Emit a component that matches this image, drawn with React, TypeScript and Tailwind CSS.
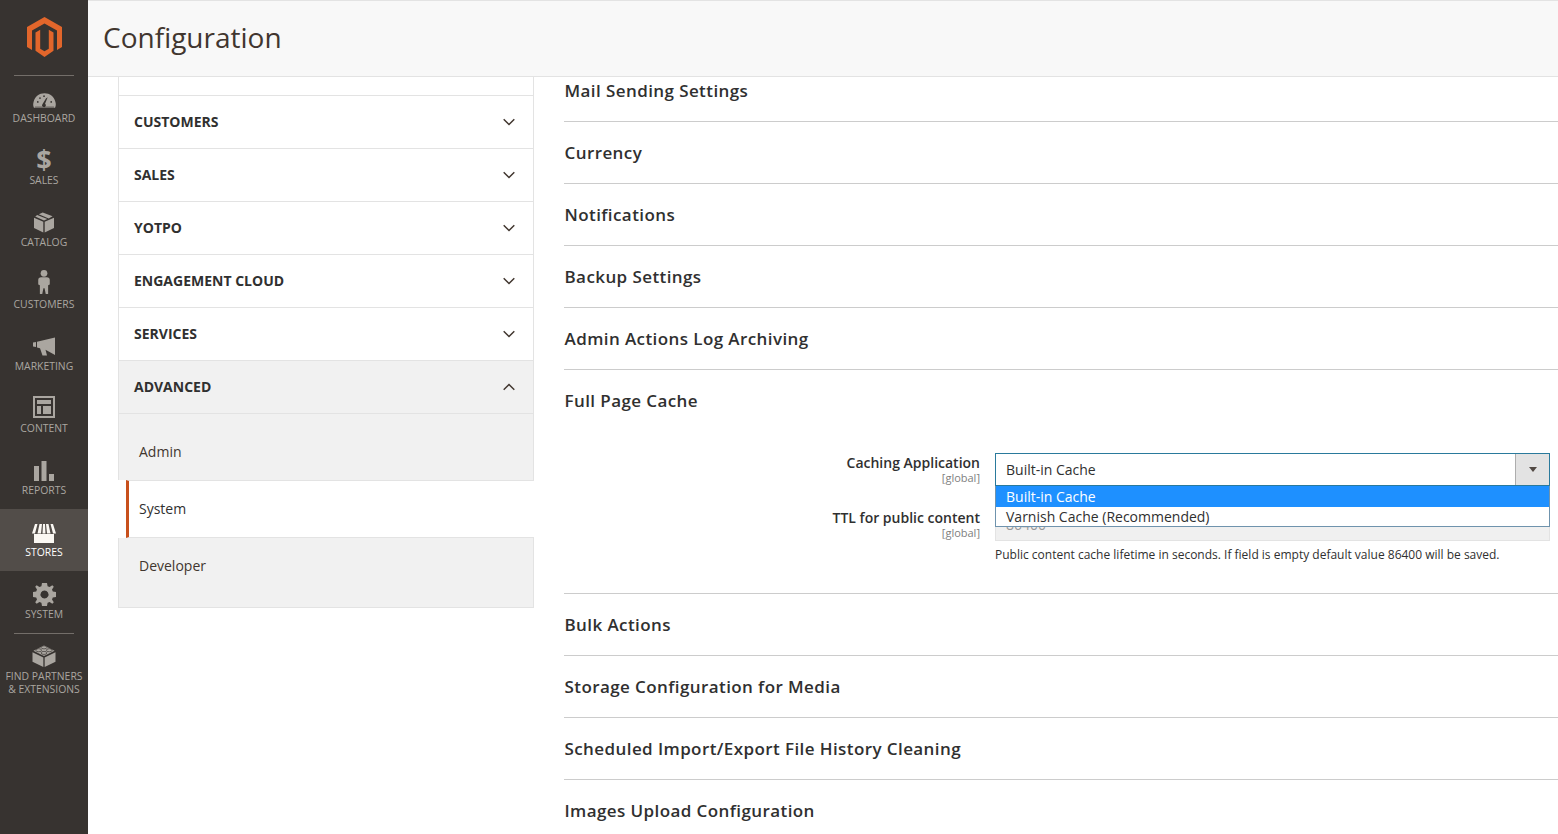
import React from "react";

const iconFill = "#aaa6a0";

function Logo() {
  return (
    <svg width="35" height="41" viewBox="0 0 35 41">
      <path fill="#e2662b" d="M17.500 0 35 10V30L30 33V13.500L17.500 6.500 5 13.500V33L0 30V10Z" />
      <path fill="#e2662b" d="M8.500 15.500 13.200 12.800V31.800L17.500 34.300 21.800 31.800V12.800L26.500 15.500V33.800L17.500 40 8.500 33.800Z" />
    </svg>
  );
}

function Dashboard() {
  return (
    <svg width="23" height="17" viewBox="0 0 24 17">
      <path fill={iconFill} d="M1 16C0 14 0 12 .6 10 2 4.500 6.500 1 12 1s10 3.500 11.400 9c.6 2 .6 4-.4 6Z" />
      <path fill="#373330" d="M13.500 6.500 15.300 5 12.600 11.800A2 2 0 1 1 9.800 12.300Z" />
      <circle cx="5" cy="10" r=".9" fill="#373330" />
      <circle cx="7.300" cy="6" r=".9" fill="#373330" />
      <circle cx="11.500" cy="4" r=".9" fill="#373330" />
      <circle cx="19" cy="10" r=".9" fill="#373330" />
      <path fill="#373330" d="M2 15h20v.6H2Z" />
    </svg>
  );
}

function Box() {
  return (
    <svg width="20" height="21" viewBox="0 0 20 20">
      <path fill={iconFill} d="M0 5.200 9.300 9.300V20L0 15.500ZM20 5.200V15.500L10.700 20V9.300ZM4.800 1.800 8.700 0 18.600 3.800 14.700 5.900ZM3.200 2.500 13.300 6.600 10 8 1.200 4.100Z" />
    </svg>
  );
}

function Customer() {
  return (
    <svg width="12" height="24" viewBox="0 0 12 25" className="mb-[1px]">
      <circle cx="6" cy="3.500" r="3.500" fill={iconFill} />
      <path fill={iconFill} d="M3 7.500h6c1.800 0 3 1 3 2.800V15l-1.700 1V25H7.800L6.600 19H5.400L4.200 25H1.700V16L0 15V10.300C0 8.500 1.200 7.500 3 7.500Z" />
    </svg>
  );
}

function Megaphone() {
  return (
    <svg width="23" height="19" viewBox="0 0 23 19" className="mb-[1px]">
      <path fill={iconFill} d="M0 5.500 3 5v5L0 9.500ZM4 4.800 22 0.500V18L12.500 12.800 14 18.500H9.500L7 11.300 4 10.500Z" />
    </svg>
  );
}

function Content() {
  return (
    <svg width="22" height="22" viewBox="0 0 22 22" className="mb-[1px]">
      <path fill={iconFill} fillRule="evenodd" d="M0 0H22V22H0ZM2 2V20H20V2ZM4 4H18V8H4ZM4 10H8V18H4ZM10 10H18V18H10Z" />
    </svg>
  );
}

function Reports() {
  return (
    <svg width="20" height="20" viewBox="0 0 20 20">
      <path fill={iconFill} d="M0 5H5V20H0ZM7.500 0H12.500V20H7.500ZM15 13H20V20H15Z" />
    </svg>
  );
}

function Stores() {
  return (
    <svg width="24" height="19" viewBox="0 0 24 19">
      <path fill="#fbf8f3" d="M2 10H22V19H2Z" />
      <path fill="#fbf8f3" d="M3 0H5.500L3 9.500H0ZM7.500 0H10L9 9.500H5.500ZM11 0H13L13.500 9.500H10.500ZM14 0H16.500L18.500 9.500H15ZM18.500 0H21L24 9.500H21Z" />
    </svg>
  );
}

function Gear() {
  return (
    <svg width="23" height="23" viewBox="0 0 23 23" className="-mb-[1px]">
      <path
        fill={iconFill}
        fillRule="evenodd"
        d="M9 0H14L14.600 3.200 16.600 4 19.300 2.200 20.800 3.700 19 6.400 19.800 8.400 23 9V14L19.800 14.600 19 16.600 20.800 19.300 19.300 20.800 16.600 19 14.600 19.800 14 23H9L8.400 19.800 6.400 19 3.700 20.800 2.200 19.300 4 16.600 3.200 14.600 0 14V9L3.200 8.400 4 6.400 2.200 3.700 3.700 2.200 6.400 4 8.400 3.200ZM11.500 7.500A4 4 0 1 0 11.501 7.500Z"
      />
    </svg>
  );
}

function Lego() {
  return (
    <svg width="24" height="23" viewBox="0 0 24 24">
      <path fill={iconFill} d="M0 8.500 11.300 14V24L0 18.500ZM24 8.500V18.500L12.700 24V14ZM12 1.500 23 7 12 12.500 1 7Z" />
      <ellipse cx="12" cy="3.500" rx="3" ry="1.600" fill={iconFill} stroke="#373330" strokeWidth=".7" />
      <ellipse cx="6.500" cy="6.500" rx="3" ry="1.600" fill={iconFill} stroke="#373330" strokeWidth=".7" />
      <ellipse cx="17.500" cy="6.500" rx="3" ry="1.600" fill={iconFill} stroke="#373330" strokeWidth=".7" />
      <ellipse cx="12" cy="9.300" rx="3" ry="1.600" fill={iconFill} stroke="#373330" strokeWidth=".7" />
    </svg>
  );
}

function SideItem({ label, icon, active }: { label: React.ReactNode; icon: React.ReactNode; active?: boolean }) {
  return (
    <div className={`h-[62px] flex flex-col items-center ${active ? "bg-[#524d49] text-white" : "text-[#aaa6a0]"}`}>
      <div className="h-[34px] flex items-end justify-center">{icon}</div>
      <div className="mt-[3px] text-[10.400px] leading-[13px] text-center whitespace-nowrap">{label}</div>
    </div>
  );
}

function Chevron({ up }: { up?: boolean }) {
  return (
    <svg width="12" height="8" viewBox="0 0 12 8" fill="none" stroke="#41362f" strokeWidth="1.500">
      <path d={up ? "M.7 6.800 6 1.500l5.300 5.300" : "M.7 1.200 6 6.500l5.300-5.300"} />
    </svg>
  );
}

function NavHead({ label, open }: { label: string; open?: boolean }) {
  return (
    <div className={`h-[53px] border-b border-[#e3e3e3] flex items-center justify-between pl-[15px] pr-[18px] ${open ? "bg-[#f1f1f1]" : "bg-white"}`}>
      <span className="text-[14px] font-bold text-[#303030] pb-[2px]">{label}</span>
      <Chevron up={open} />
    </div>
  );
}

function Section({ title, last }: { title: string; last?: boolean }) {
  return (
    <div className={`h-[62px] flex items-center ${last ? "" : "border-b border-[#cccccc]"}`}>
      <span className="text-[17px] font-semibold tracking-[0.41px] text-[#303030] pl-[0.5px]">{title}</span>
    </div>
  );
}

export default function App() {
  return (
    <div className="h-[834px] w-[1558px] overflow-hidden flex bg-white font-['Open_Sans',sans-serif]">
      <aside className="w-[88px] shrink-0 bg-[#373330] flex flex-col">
        <div className="h-[76px] shrink-0 relative flex justify-center pt-[17px]">
          <Logo />
          <div className="absolute left-[14px] right-[14px] bottom-0 h-px bg-[#736e69]" />
        </div>
        <div className="-mt-px">
          <SideItem label="DASHBOARD" icon={<Dashboard />} />
          <SideItem label="SALES" icon={<span className="text-[27px] leading-[24px] font-bold">$</span>} />
          <SideItem label="CATALOG" icon={<Box />} />
          <SideItem label="CUSTOMERS" icon={<Customer />} />
          <SideItem label="MARKETING" icon={<Megaphone />} />
          <SideItem label="CONTENT" icon={<Content />} />
          <SideItem label="REPORTS" icon={<Reports />} />
          <SideItem label="STORES" icon={<Stores />} active />
          <SideItem label="SYSTEM" icon={<Gear />} />
        </div>
        <div className="mx-[14px] h-px bg-[#736e69]" />
        <SideItem
          label={
            <>
              FIND PARTNERS
              <br />& EXTENSIONS
            </>
          }
          icon={<Lego />}
        />
      </aside>

      <main className="flex-1 min-w-0 flex flex-col">
        <header className="h-[77px] shrink-0 bg-[#f8f8f8] border-t border-t-[#e3e3e3] border-b border-b-[#e3e3e3] flex items-center pl-[15px]">
          <h1 className="text-[28px] font-normal text-[#41362f] pb-[3px]">Configuration</h1>
        </header>

        <div className="flex flex-1 min-h-0">
          <nav className="w-[416px] ml-[30px] shrink-0 self-start">
            <div className="border-x border-[#e3e3e3]">
              <div className="h-[19px] border-b border-[#e3e3e3]" />
              <NavHead label="CUSTOMERS" />
              <NavHead label="SALES" />
              <NavHead label="YOTPO" />
              <NavHead label="ENGAGEMENT CLOUD" />
              <NavHead label="SERVICES" />
              <NavHead label="ADVANCED" open />
            </div>
            <div className="h-[66px] bg-[#f1f1f1] border-x border-[#e3e3e3] flex items-center pl-[20px] text-[14px] text-[#41362f] pt-[9px]">
              Admin
            </div>
            <div className="h-[58px] bg-white border-y border-[#e3e3e3] border-l-[3px] border-l-[#c8501c] ml-[8px] flex items-center pl-[10px] pb-[1px] text-[14px] font-medium text-[#303030]">
              System
            </div>
            <div className="h-[70px] bg-[#f1f1f1] border-x border-b border-[#e3e3e3] flex items-start pl-[20px] pt-[17px] text-[14px] text-[#41362f]">
              Developer
            </div>
          </nav>

          <section className="flex-1 min-w-0 ml-[30px] -mt-[17px]">
            <Section title="Mail Sending Settings" />
            <Section title="Currency" />
            <Section title="Notifications" />
            <Section title="Backup Settings" />
            <Section title="Admin Actions Log Archiving" />
            <div className="h-[224px] border-b border-[#cccccc]">
              <div className="h-[62px] flex items-center">
                <span className="text-[17px] font-semibold tracking-[0.41px] text-[#303030] pl-[0.5px]">Full Page Cache</span>
              </div>
              <div className="flex mt-[21px]">
                <div className="w-[416px] shrink-0 text-right">
                  <div className="text-[14px] leading-[19px] font-semibold text-[#303030]">Caching Application</div>
                  <div className="text-[11px] leading-[11px] text-[#808080]">[global]</div>
                </div>
                <div className="ml-[15px] w-[555px] relative">
                  <div className="h-[33px] border border-[#2a7a9c] flex items-stretch bg-white">
                    <div className="flex-1 flex items-center pl-[10px] text-[14px] text-[#303030]">Built-in Cache</div>
                    <div className="w-[34px] bg-[#e3e3e3] border-l border-[#adadad] flex items-center justify-center">
                      <svg width="8" height="5" viewBox="0 0 8 5">
                        <path fill="#514943" d="M0 0H8L4 5Z" />
                      </svg>
                    </div>
                  </div>
                  <div className="absolute left-0 right-0 top-[33px] z-10 h-[41px] bg-white border border-t-0 border-[#6f93ad] text-[14px]">
                    <div className="h-[21px] bg-[#1e90ff] text-white pl-[10px] leading-[21px]">Built-in Cache</div>
                    <div className="h-[19px] pl-[10px] text-[#303030] leading-[19px]">Varnish Cache (Recommended)</div>
                  </div>
                </div>
              </div>
              <div className="flex mt-[22px]">
                <div className="w-[416px] shrink-0 text-right">
                  <div className="text-[14px] leading-[19px] text-[#303030] font-semibold">TTL for public content</div>
                  <div className="text-[11px] leading-[11px] text-[#808080]">[global]</div>
                </div>
                <div className="ml-[15px] w-[555px]">
                  <div className="h-[33px] bg-[#f0f0f0] border border-[#e3e3e3] flex items-center pl-[10px] text-[14px] text-[#999999]">
                    86400
                  </div>
                  <div className="mt-[6px] text-[12px] leading-[16px] text-[#303030] whitespace-nowrap">
                    Public content cache lifetime in seconds. If field is empty default value 86400 will be saved.
                  </div>
                </div>
              </div>
            </div>
            <Section title="Bulk Actions" />
            <Section title="Storage Configuration for Media" />
            <Section title="Scheduled Import/Export File History Cleaning" />
            <Section title="Images Upload Configuration" last />
          </section>
        </div>
      </main>
    </div>
  );
}
